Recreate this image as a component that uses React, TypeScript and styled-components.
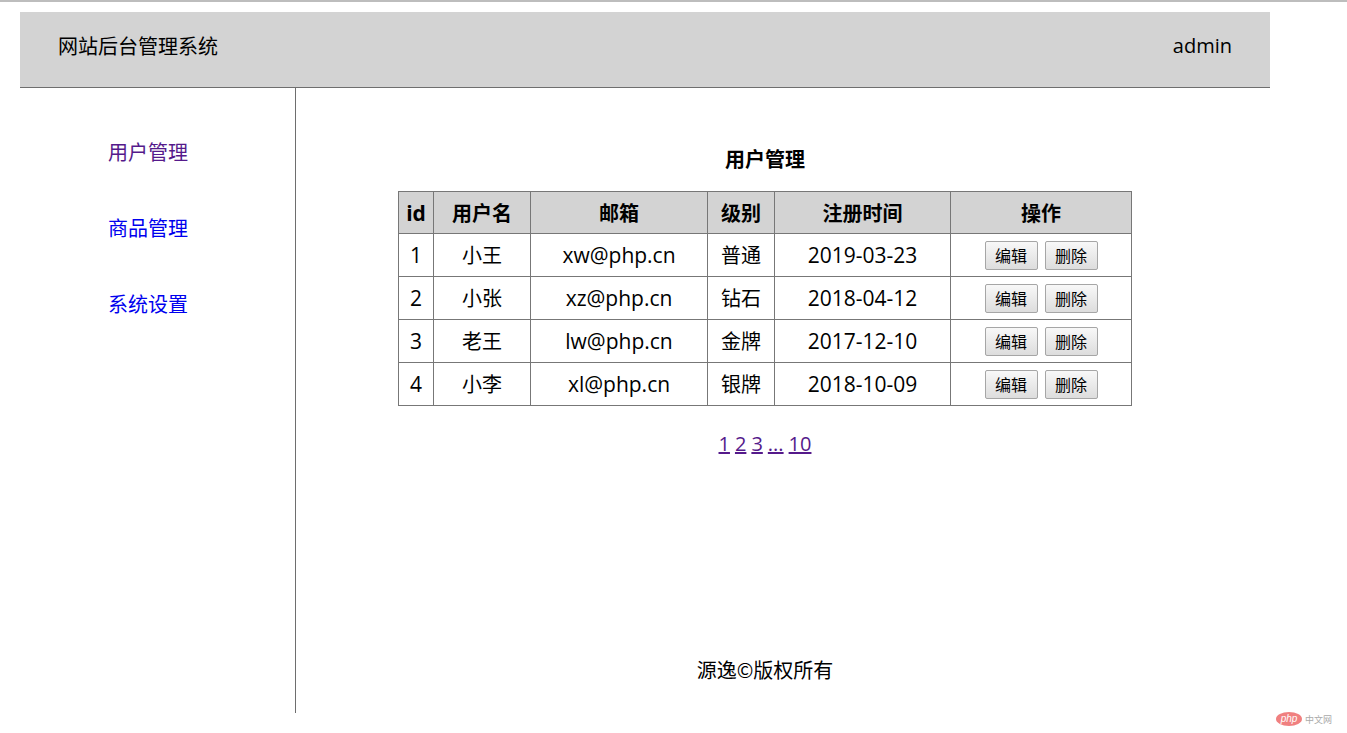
import React from "react";
import styled, { createGlobalStyle } from "styled-components";

const Global = createGlobalStyle`
  html, body { margin: 0; padding: 0; background: #fff; }
  body { font-family: "Noto Sans CJK SC", "Noto Sans", sans-serif; color: #000; }
`;

const Page = styled.div`
  border-top: 2px solid #bdbdbd;
  padding: 10px 0 0 20px;
  height: 731px;
  box-sizing: border-box;
  position: relative;
  overflow: hidden;
`;

const Frame = styled.div`
  width: 1250px;
`;

const Header = styled.header`
  height: 76px;
  box-sizing: border-box;
  background: #d3d3d3;
  border-bottom: 1px solid #6e6e6e;
  display: flex;
  align-items: center;
  justify-content: space-between;
  padding: 0 38px 8px;
  font-size: 20px;
  line-height: 28px;
`;

const Brand = styled.div``;
const User = styled.div`
  font-family: "Open Sans", "Noto Sans CJK SC", sans-serif;
  font-size: 20px;
`;

const Body = styled.div`
  display: flex;
  height: 625px;
`;

const Sidebar = styled.nav`
  width: 276px;
  border-right: 1px solid #6e6e6e;
  display: flex;
  flex-direction: column;
  gap: 48px;
  padding: 50px 0 0 88px;
  box-sizing: border-box;
`;

const NavLink = styled.a<{ $visited?: boolean }>`
  font-size: 20px;
  line-height: 28px;
  color: ${(p) => (p.$visited ? "#551a8b" : "#0000ee")};
  text-decoration: none;
`;

const Main = styled.main`
  width: 938px;
  display: flex;
  flex-direction: column;
  align-items: center;
`;

const Title = styled.h3`
  margin: 57px 0 0;
  font-size: 20px;
  line-height: 28px;
  font-weight: bold;
`;

const Table = styled.table`
  margin-top: 18px;
  border-collapse: collapse;
  border: 1px solid #777;
  font-size: 20px;
  text-align: center;
`;

const Th = styled.th<{ $w: number }>`
  width: ${(p) => p.$w}px;
  height: 42px;
  padding: 0;
  border: 1px solid #777;
  background: #d3d3d3;
  font-weight: bold;
  line-height: 28px;
  box-sizing: border-box;
`;

const Td = styled.td`
  height: 42px;
  padding: 0;
  border: 1px solid #777;
  line-height: 28px;
`;

const Latin = styled.span`
  font-family: "Open Sans", "Noto Sans CJK SC", sans-serif;
  font-size: 21px;
`;

const Actions = styled.div`
  display: flex;
  justify-content: center;
  gap: 7px;
`;

const Btn = styled.button`
  width: 53px;
  height: 29px;
  padding: 0;
  font-family: "Noto Sans CJK SC", sans-serif;
  font-size: 16px;
  line-height: 20px;
  color: #000;
  background: linear-gradient(#f8f8f8, #dddddd);
  border: 1px solid #a6a6a6;
  border-radius: 2px;
`;

const Pager = styled.div`
  margin-top: 24px;
  display: flex;
  gap: 5px;
  font-family: "Open Sans", "Noto Sans CJK SC", sans-serif;
  font-size: 20px;
  line-height: 28px;
`;

const PageLink = styled.a`
  color: #551a8b;
  text-decoration: underline;
`;

const Footer = styled.footer`
  margin-top: auto;
  margin-bottom: 29px;
  font-size: 20px;
  line-height: 28px;
`;

const Watermark = styled.div`
  position: absolute;
  right: 15px;
  bottom: 5px;
  display: flex;
  align-items: center;
  gap: 3px;
  font-size: 9px;
  color: #aaa;
`;

const rows = [
  ["1", "小王", "xw@php.cn", "普通", "2019-03-23"],
  ["2", "小张", "xz@php.cn", "钻石", "2018-04-12"],
  ["3", "老王", "lw@php.cn", "金牌", "2017-12-10"],
  ["4", "小李", "xl@php.cn", "银牌", "2018-10-09"],
];

export default function App() {
  return (
    <Page>
      <Global />
      <Frame>
        <Header>
          <Brand>网站后台管理系统</Brand>
          <User>admin</User>
        </Header>
        <Body>
          <Sidebar>
            <NavLink href="#" $visited>用户管理</NavLink>
            <NavLink href="#">商品管理</NavLink>
            <NavLink href="#">系统设置</NavLink>
          </Sidebar>
          <Main>
            <Title>用户管理</Title>
            <Table>
              <thead>
                <tr>
                  <Th $w={35}><Latin>id</Latin></Th>
                  <Th $w={97}>用户名</Th>
                  <Th $w={177}>邮箱</Th>
                  <Th $w={67}>级别</Th>
                  <Th $w={176}>注册时间</Th>
                  <Th $w={181}>操作</Th>
                </tr>
              </thead>
              <tbody>
                {rows.map((r) => (
                  <tr key={r[0]}>
                    <Td><Latin>{r[0]}</Latin></Td>
                    <Td>{r[1]}</Td>
                    <Td><Latin>{r[2]}</Latin></Td>
                    <Td>{r[3]}</Td>
                    <Td><Latin>{r[4]}</Latin></Td>
                    <Td>
                      <Actions>
                        <Btn>编辑</Btn>
                        <Btn>删除</Btn>
                      </Actions>
                    </Td>
                  </tr>
                ))}
              </tbody>
            </Table>
            <Pager>
              <PageLink href="#">1</PageLink>
              <PageLink href="#">2</PageLink>
              <PageLink href="#">3</PageLink>
              <PageLink href="#">...</PageLink>
              <PageLink href="#">10</PageLink>
            </Pager>
            <Footer>源逸©版权所有</Footer>
          </Main>
        </Body>
      </Frame>
      <Watermark>
        <svg width="26" height="14" viewBox="0 0 26 14">
          <ellipse cx="13" cy="7" rx="13" ry="7" fill="#f08080" />
          <text x="13" y="10" textAnchor="middle" fontSize="10" fontStyle="italic" fill="#fff" fontFamily="Liberation Sans, sans-serif">php</text>
        </svg>
        <span>中文网</span>
      </Watermark>
    </Page>
  );
}
